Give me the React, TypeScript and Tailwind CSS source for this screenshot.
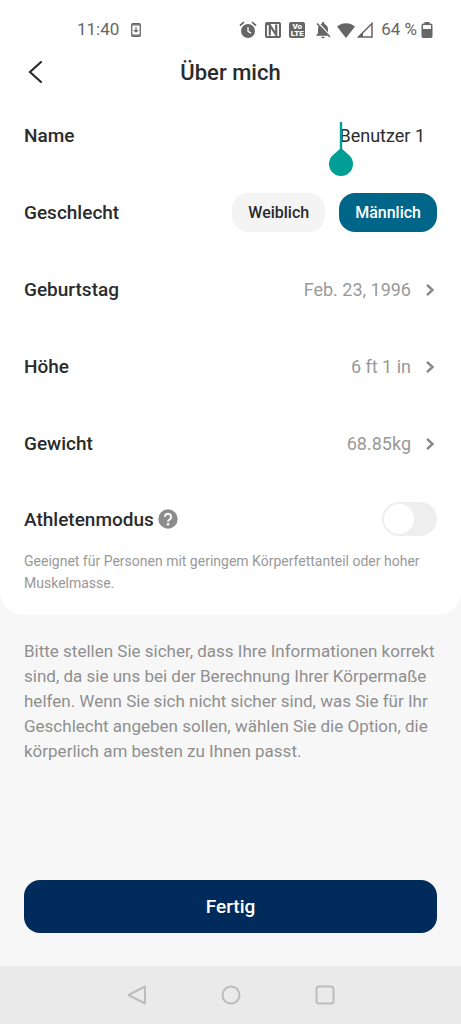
import { useState } from 'react';
import type { ReactNode } from 'react';
import { MdNotificationsOff } from 'react-icons/md';

function StatusBar() {
  return (
    <div className="flex h-12 items-center justify-between pt-3 pl-[77px] pr-7 text-[17px] text-[#666666]">
      <div className="flex items-center gap-3">
        <span>11:40</span>
        <svg width="10" height="14" viewBox="0 0 10 14" fill="none" stroke="currentColor">
          <rect x="0.75" y="0.75" width="8.5" height="12.5" rx="1" strokeWidth="1.3" />
          <path d="M1 1.8h8M1 12.2h8" strokeWidth="1.3" />
          <path d="M5 4v5M3 7l2 2 2-2" strokeWidth="1.1" />
        </svg>
      </div>

      <div className="flex items-center">
        <svg width="18" height="18" viewBox="0 0 18 18" fill="none">
          <circle cx="9" cy="10" r="7" fill="currentColor" />
          <path d="M1 4.5 5 1.2M17 4.5l-4-3.3" stroke="currentColor" strokeWidth="1.7" />
          <path d="M9 6v4.3l3 1.8" stroke="white" strokeWidth="1.3" />
        </svg>
        <svg className="ml-2" width="16" height="16" viewBox="0 0 16 16" fill="none" stroke="currentColor">
          <rect x="1" y="1" width="14" height="14" rx="0.8" strokeWidth="2" />
          <path d="M4.8 13.5V3.2l6.4 9.6V2.5" strokeWidth="2.2" />
          <path d="M2 2h3.6" strokeWidth="2.4" />
        </svg>
        <span className="ml-2 flex h-4 w-4 flex-col items-center justify-center rounded-xs bg-[#666666] text-[8px] leading-[7px] font-black text-white">
          <span>Vo</span>
          <span>LTE</span>
        </span>
        <MdNotificationsOff className="ml-2" size={20} />
        <svg className="ml-1" width="18" height="15" viewBox="0 0 18 15" fill="currentColor">
          <path d="M0 3.5C5-1 13-1 18 3.5L9 15Z" />
        </svg>
        <svg className="ml-0.5" width="16" height="16" viewBox="0 0 16 16">
          <path d="M15 1.5V15H1.5Z" fill="none" stroke="currentColor" strokeWidth="1.5" />
          <path d="M6 10v5H1Z" fill="currentColor" />
        </svg>
        <span className="ml-2">64 %</span>
        <svg className="ml-1" width="12" height="16" viewBox="0 0 12 16">
          <path d="M3.5 0h5v2h-5z" fill="currentColor" />
          <rect x="1.25" y="2.25" width="9.5" height="13" rx="1" fill="none" stroke="currentColor" strokeWidth="1.5" />
          <path d="M1 7h10v8H1z" fill="currentColor" />
        </svg>
      </div>
    </div>
  );
}

function Row({ label, children }: { label: ReactNode; children: ReactNode }) {
  return (
    <div className="flex h-[77px] items-center justify-between">
      <div className="text-[19px] leading-[31px] font-medium">{label}</div>
      {children}
    </div>
  );
}

function ValueButton({ label, value }: { label: string; value: string }) {
  return (
    <button type="button" aria-label={`${label}: ${value}`} className="flex items-center gap-3.5 text-lg text-[#999999]">
      {value}
      <svg className="mr-0.5" width="10" height="14" viewBox="0 0 10 14" fill="none" stroke="#8a8a8a" strokeWidth="2.5">
        <path d="M2 1.8 7.5 7 2 12.2" />
      </svg>
    </button>
  );
}

const genders = ['Weiblich', 'Männlich'];

export default function App() {
  const [name, setName] = useState('Benutzer 1');
  const [gender, setGender] = useState('Männlich');
  const [athlete, setAthlete] = useState(false);

  return (
    <div className="flex min-h-screen flex-col bg-[#f7f7f7] font-['Roboto',sans-serif] text-[#2b2b2b]">
      <main className="rounded-b-3xl bg-white">
        <StatusBar />

        <header className="grid h-12 grid-cols-[1fr_auto_1fr] items-center px-6">
          <button type="button" aria-label="Zurück" className="w-6 pl-1">
            <svg width="16" height="24" viewBox="0 0 16 24" fill="none" stroke="currentColor" strokeWidth="2.2" strokeLinecap="round">
              <path d="M13 2 2 12l11 10" />
            </svg>
          </button>
          <h1 className="text-[22px] font-medium">Über mich</h1>
        </header>

        <div className="px-6 pt-px">
          <Row label={<label htmlFor="name">Name</label>}>
            <div className="relative mr-3">
              <input
                id="name"
                type="text"
                value={name}
                onChange={(e) => setName(e.target.value)}
                className="block field-sizing-content text-right text-lg outline-none"
              />
              {/* text cursor with its drag handle */}
              <svg className="pointer-events-none absolute top-0 -left-2.5" width="24" height="54" viewBox="0 0 24 54" fill="#009e94">
                <path d="M10.8 0h2.4v30h-2.4z" />
                <path d="M12 26l8.5 7.5a12 12 0 1 1-17 0Z" />
              </svg>
            </div>
          </Row>

          <Row label="Geschlecht">
            <div className="flex gap-3.5">
              {genders.map((g) => (
                <button
                  key={g}
                  type="button"
                  aria-pressed={gender === g}
                  onClick={() => setGender(g)}
                  className={`h-[39px] rounded-2xl px-4 text-base font-medium ${
                    gender === g ? 'bg-[#006689] text-white' : 'bg-[#f4f4f4] text-[#2b2b2b]'
                  }`}
                >
                  {g}
                </button>
              ))}
            </div>
          </Row>

          <Row label="Geburtstag">
            <ValueButton label="Geburtstag" value="Feb. 23, 1996" />
          </Row>
          <Row label="Höhe">
            <ValueButton label="Höhe" value="6 ft 1 in" />
          </Row>
          <Row label="Gewicht">
            <ValueButton label="Gewicht" value="68.85kg" />
          </Row>

          <div className="flex items-center justify-between pt-5">
            <div className="flex items-center gap-1 text-[19px] leading-[31px] font-medium">
              <label htmlFor="athlete">Athletenmodus</label>
              <button type="button" aria-label="Hilfe">
                <svg width="20" height="20" viewBox="0 0 20 20" fill="none">
                  <circle cx="10" cy="10" r="9.7" fill="#8c8c8c" />
                  <path d="M6.9 7.8a3.1 3.1 0 1 1 4.7 2.7c-1.1.7-1.6 1.1-1.6 2.2" stroke="white" strokeWidth="2" />
                  <circle cx="10" cy="15.3" r="1.3" fill="white" />
                </svg>
              </button>
            </div>
            <input
              id="athlete"
              type="checkbox"
              role="switch"
              checked={athlete}
              onChange={(e) => setAthlete(e.target.checked)}
              className="flex h-[34px] w-[55px] appearance-none items-center rounded-full bg-[#eeeeee] px-0.5 before:h-[30px] before:w-[30px] before:rounded-full before:bg-white checked:justify-end checked:bg-[#006689]"
            />
          </div>
          <p className="pt-3.5 pb-[21px] text-sm leading-[22px] text-[#999999]">
            Geeignet für Personen mit geringem Körperfettanteil oder hoher Muskelmasse.
          </p>
        </div>
      </main>

      <p className="px-6 pt-6 text-[17px] leading-[25px] text-[#8f8f8f]">
        Bitte stellen Sie sicher, dass Ihre Informationen korrekt sind, da sie uns bei der Berechnung Ihrer Körpermaße
        helfen. Wenn Sie sich nicht sicher sind, was Sie für Ihr Geschlecht angeben sollen, wählen Sie die Option, die
        körperlich am besten zu Ihnen passt.
      </p>

      <div className="mt-auto px-6 pt-6 pb-[33px]">
        <button type="button" className="h-[53px] w-full rounded-2xl bg-[#002b5a] text-[19px] leading-[31px] font-medium text-white">
          Fertig
        </button>
      </div>

      <nav className="flex h-[58px] items-center justify-center gap-[74px] bg-[#eaeaea] text-[#bdbdbd]">
        <button type="button" aria-label="Zurück">
          <svg width="20" height="20" viewBox="0 0 20 20" fill="none" stroke="currentColor" strokeWidth="2" strokeLinejoin="round">
            <path d="M18 1.5v17L1.5 10Z" />
          </svg>
        </button>
        <button type="button" aria-label="Startseite">
          <svg width="20" height="20" viewBox="0 0 20 20" fill="none" stroke="currentColor" strokeWidth="2">
            <circle cx="10" cy="10" r="8.5" />
          </svg>
        </button>
        <button type="button" aria-label="Übersicht">
          <svg width="20" height="20" viewBox="0 0 20 20" fill="none" stroke="currentColor" strokeWidth="2">
            <rect x="1.5" y="1.5" width="17" height="17" rx="2.5" />
          </svg>
        </button>
      </nav>
    </div>
  );
}
